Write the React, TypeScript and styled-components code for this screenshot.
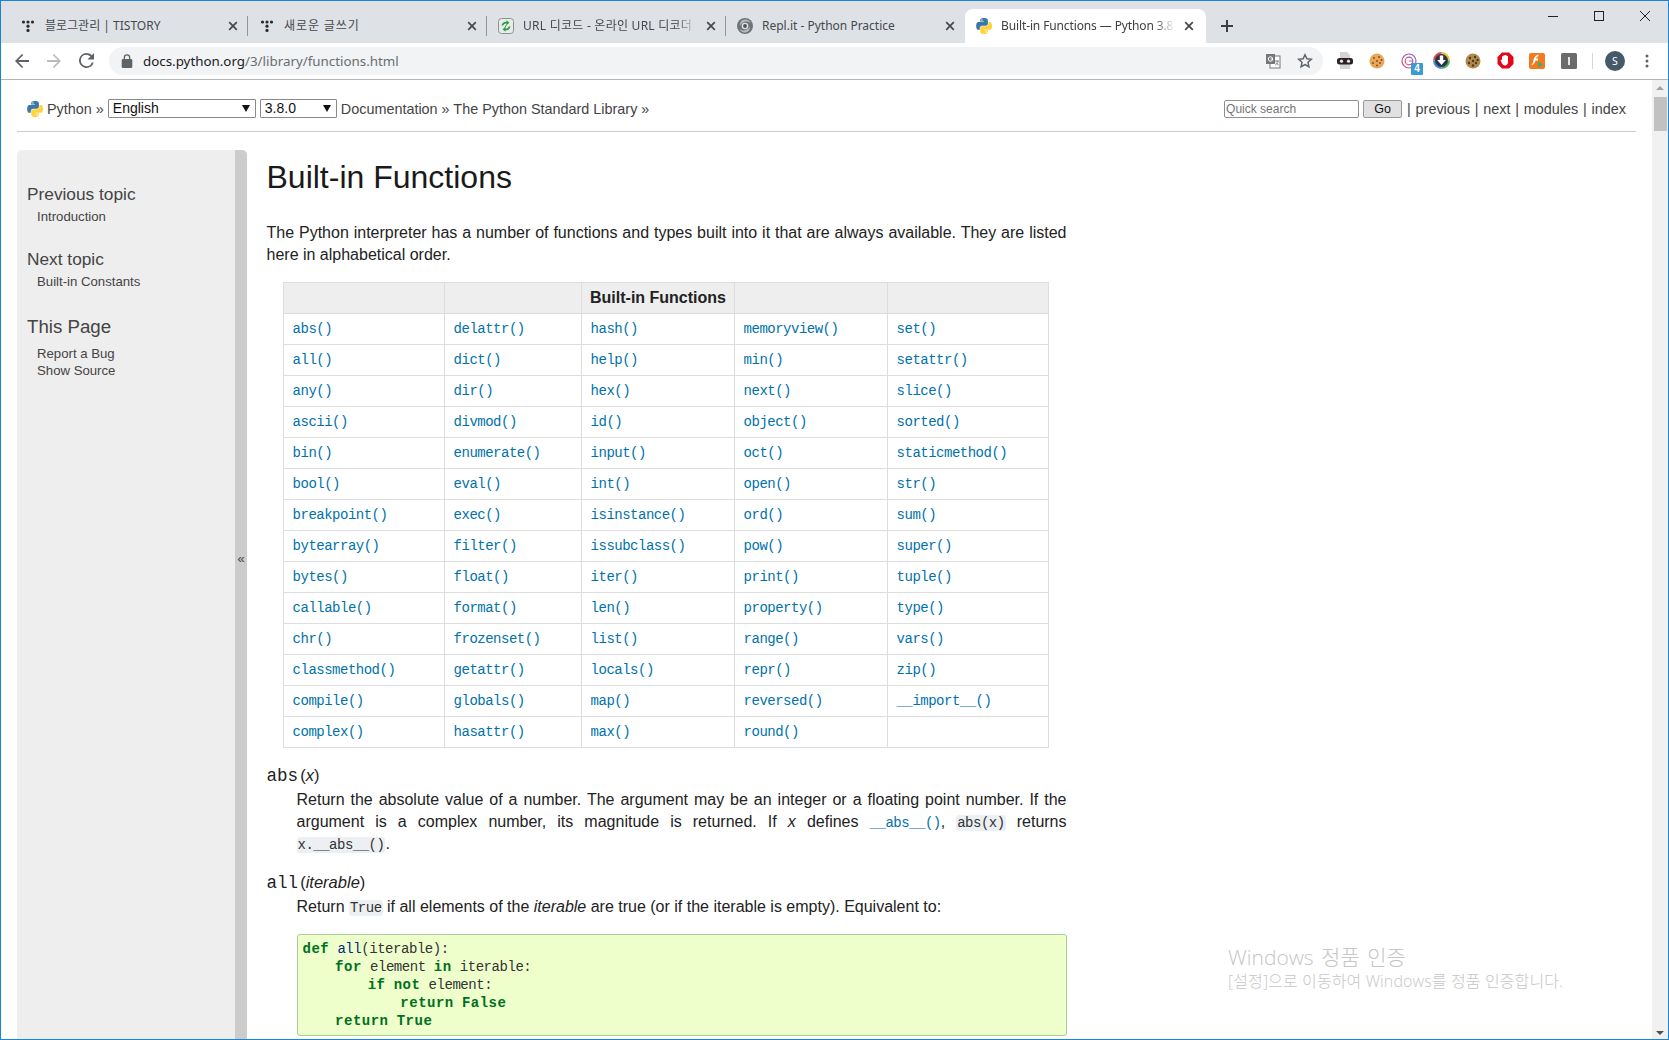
import React from "react";
import styled, { createGlobalStyle } from "styled-components";

const Global = createGlobalStyle`
  html, body { margin: 0; padding: 0; background: #fff; overflow: hidden; }
  * { box-sizing: border-box; }
`;

const UI = `"Noto Sans", "Noto Sans CJK KR", sans-serif`;
const DOC = `"Liberation Sans", "Noto Sans CJK KR", sans-serif`;
const MONO = `"Liberation Mono", "Noto Sans CJK KR", monospace`;

const Win = styled.div`
  width: 1669px; height: 1040px; overflow: hidden; position: relative;
  border: 1px solid #1a84d6; display: flex; flex-direction: column; background: #fff;
`;
const TabStrip = styled.div`
  height: 42px; flex: none; background: #dee1e6; display: flex; align-items: flex-end; padding-left: 8px;
`;
const Tab = styled.div<{ $active?: boolean; $sep?: boolean; $w?: number }>`
  width: ${p => p.$w ?? 239}px; height: 34px; flex: none; position: relative; display: flex; align-items: center;
  padding-left: 11px; font: 12px/16px ${UI}; color: ${p => p.$active ? "#3c4043" : "#45494e"};
  background: ${p => p.$active ? "#fff" : "transparent"};
  border-radius: ${p => p.$active ? "8px 8px 0 0" : "0"};
  &::after {
    content: ""; display: ${p => p.$sep ? "block" : "none"}; position: absolute; right: 0; top: 7px; width: 1px; height: 20px; background: #92969b;
  }
`;
const Fav = styled.span`
  width: 16px; height: 16px; flex: none; display: flex; align-items: center; justify-content: center; margin-right: 9px;
`;
const TabTitle = styled.span<{ $fade?: boolean; $ls?: number }>`
  flex: 1; min-width: 0; white-space: nowrap; overflow: hidden; letter-spacing: ${p => p.$ls ?? 0}px;
  ${p => p.$fade ? "-webkit-mask-image: linear-gradient(90deg, #000 88%, transparent 100%);" : ""}
`;
const TabClose = styled.span<{ $end?: boolean }>`
  width: 16px; height: 16px; flex: none; margin: 0 ${p => p.$end ? 9 : 7}px 0 6px; display: flex; align-items: center; justify-content: center; color: #45494e;
`;
const NewTab = styled.span`
  width: 16px; height: 16px; margin: 0 0 9px 13px; color: #3c4043; display: flex; align-items: center; justify-content: center;
`;
const WinCtrls = styled.div`
  margin-left: auto; align-self: flex-start; display: flex; color: #222;
`;
const WinBtn = styled.span`
  width: 46px; height: 30px; display: flex; align-items: center; justify-content: center;
`;
const Toolbar = styled.div`
  height: 37px; flex: none; background: #fff; border-bottom: 1px solid #b4b4b4; display: flex; align-items: center; padding: 0 7px 1px 5px;
`;
const ToolBtn = styled.span<{ $dim?: boolean }>`
  width: 32px; height: 28px; flex: none; display: flex; align-items: center; justify-content: center; position: relative;
  color: ${p => p.$dim ? "#babcbe" : "#5f6368"};
`;
const Omni = styled.div`
  width: 1214px; height: 28px; margin: 0 6px 0 7px; flex: none; border-radius: 14px; background: #f1f3f4;
  display: flex; align-items: center; padding-left: 11px; padding-right: 2px;
`;
const Lock = styled.span`
  width: 14px; height: 14px; margin-right: 9px; display: flex; align-items: center; justify-content: center; color: #5f6368;
`;
const Url = styled.span`
  font: 13.35px/18px ${UI}; color: #202124; flex: 1; white-space: nowrap;
`;
const UrlRest = styled.span`color: #6a6e73;`;
const Badge = styled.span`
  position: absolute; left: 18px; top: 16px; width: 12px; height: 12px; background: #3b9ad6; color: #fff; font: bold 10px/12px ${DOC}; text-align: center; border-radius: 1px;
`;
const Sep = styled.span`
  width: 1px; height: 16px; background: #d6d7d9; flex: none; margin: 0 6px 0 7px;
`;
const Avatar = styled.span`
  width: 20px; height: 20px; flex: none; margin: 0 6px; border-radius: 50%; background: #455a68; color: #fff; font: 10.5px/20px ${UI}; text-align: center;
`;
const Body = styled.div`
  flex: 1; min-height: 0; display: flex;
`;
const Doc = styled.div`
  width: 1651px; flex: none; padding-left: 16px; overflow: hidden; font: 16px/22px ${DOC}; color: #222;
`;
const Related = styled.div`
  width: 1619px; height: 52px; border-bottom: 1px solid #ccc; display: flex; align-items: center; padding: 6px 10px 0 8px;
  font: 14.4px/18px ${DOC}; color: #444; margin-bottom: 18px;
`;
const Logo = styled.span`
  width: 16px; height: 16px; display: flex; margin: 0 4px 0 2px; flex: none;
`;
const Pick = styled.span<{ $w: number; $second?: boolean }>`
  width: ${p => p.$w}px; height: 19px; flex: none; border: 1px solid #8a8a8a; border-radius: 1px; background: #fff; color: #111;
  display: flex; align-items: center; justify-content: space-between; padding: 0 5px 0 4px; font: 14px/17px ${DOC};
  margin-left: ${p => p.$second ? 0 : 4}px; margin-right: 4px;
`;
const Arrow = styled.span`
  width: 0; height: 0; border-left: 4px solid transparent; border-right: 4px solid transparent; border-top: 7px solid #111;
`;
const Right = styled.div`
  margin-left: auto; display: flex; align-items: center; word-spacing: 0.8px;
`;
const Search = styled.span`
  width: 135px; height: 18px; border: 1px solid #8f8f8f; border-radius: 2px; font: 12px/16px ${DOC}; color: #757575; padding-left: 1px; background: #fff; word-spacing: 0;
`;
const Go = styled.span`
  width: 39px; height: 18px; margin: 0 5px 0 4px; border: 1px solid #999; border-radius: 2px; background: #e1e1e1; color: #111; text-align: center; font: 12.5px/17px ${DOC};
`;
const Columns = styled.div`display: flex; align-items: stretch; height: 900px;`;
const Side = styled.aside`
  width: 230px; flex: none; display: flex; background: #eee; border-radius: 5px 5px 0 0; overflow: hidden;
`;
const SideInner = styled.div`
  flex: 1; padding: 33px 10px 0 10px; color: #444;
`;
const Collapse = styled.div`
  width: 12px; flex: none; background: #ccc; display: flex; align-items: center; justify-content: center; color: #444;
  font: 13px/14px ${DOC}; padding-bottom: 82px;
`;
const SideTitle = styled.div<{ $big?: boolean }>`
  font: ${p => p.$big ? 18.7 : 17.3}px/22px ${DOC}; color: #444;
  margin: ${p => p.$big ? "26px 0 7px" : "0 0 3px"};
`;
const SideLink = styled.div<{ $gap?: boolean }>`
  font: 13.2px/17px ${DOC}; color: #444; padding-left: 10px; margin-bottom: ${p => p.$gap ? 23 : 0}px;
`;
const Main = styled.main`
  width: 800px; margin-left: 19.5px; flex: none;
`;
const H1 = styled.h1`
  font: 400 32px/38px ${DOC}; color: #1a1a1a; margin: 8px 0 26px;
`;
const P = styled.p`
  margin: 0 0 16px; text-align: justify;
`;
const Table = styled.table`
  margin: 0 0 0 16.5px; width: 765px; border-collapse: collapse; table-layout: fixed;
`;
const Col = styled.col<{ $w: number }>`width: ${p => p.$w}px;`;
const Th = styled.th`
  height: 31px; padding: 0 8px 0 8px; background: #eee; border: 1px solid #ddd; font: bold 16px/20px ${DOC}; color: #222; text-align: left;
`;
const Td = styled.td`
  height: 31px; padding: 0 8px 0 8.6px; border: 1px solid #ddd; font: 14px/18px ${MONO}; letter-spacing: -0.5px; color: #0072aa; white-space: nowrap;
`;
const Sig = styled.div<{ $gap: number }>`
  margin-top: ${p => p.$gap}px; font: 16.5px/24px ${DOC}; color: #222; height: 26px; display: flex; align-items: baseline;
`;
const SigName = styled.span`
  font: 17.6px/24px ${MONO}; color: #222; margin-right: 2px;
`;
const Dd = styled.p`
  margin: 0 0 0 30px; text-align: justify; width: 770px;
`;
const Lit = styled.code`
  font: 14px/18px ${MONO}; letter-spacing: -0.5px; background: #ecf0f3; border-radius: 3px; padding: 0 1px; color: #333;
`;
const XRef = styled.code`
  font: 14px/18px ${MONO}; letter-spacing: -0.5px; color: #0072aa;
`;
const Pre = styled.pre`
  margin: 16px 0 0 30px; width: 770px; height: 102px; padding: 5px; background: #eeffcc; border: 1px solid #aacc99; border-radius: 3px;
  font: 14px/18px ${MONO}; letter-spacing: -0.45px; word-spacing: 0.2px; color: #333; overflow: hidden;
`;
const Kw = styled.b`color: #007020; font-weight: 700; letter-spacing: 0.5px;`;
const Fn = styled.span`color: #06287e;`;
const Scrollbar = styled.div`
  width: 16px; flex: none; background: #f1f1f1; display: flex; flex-direction: column; align-items: center; justify-content: space-between; padding: 6px 0 4px;
`;
const Thumb = styled.div`
  width: 13px; height: 34px; background: #c1c1c1; margin-top: 7px;
`;
const ScrollTop = styled.div`display: flex; flex-direction: column; align-items: center;`;
const UpArrow = styled.span`
  width: 0; height: 0; border-left: 4px solid transparent; border-right: 4px solid transparent; border-bottom: 4px solid #a3a3a3;
`;
const DownArrow = styled.span`
  width: 0; height: 0; border-left: 4px solid transparent; border-right: 4px solid transparent; border-top: 4px solid #505050;
`;
const Watermark = styled.div`
  position: absolute; left: 1227px; top: 943px; color: #c6c6c6; font-family: "Open Sans", "Noto Sans CJK KR", sans-serif; font-weight: 300; pointer-events: none;
`;
const WmTitle = styled.div`font-size: 21px; line-height: 27px; word-spacing: 2px;`;
const WmSub = styled.div`font-size: 16px; line-height: 21px; letter-spacing: 0.12px;`;

const Python = () => (
  <svg width="16" height="16" viewBox="0 0 110 112">
    <path fill="#3b77a8" d="M54.919 0C50.335.021 45.958.412 42.106 1.094 30.76 3.099 28.7 7.295 28.7 15.032v10.219h26.813v3.406H18.638c-7.793 0-14.616 4.684-16.75 13.594-2.462 10.213-2.571 16.586 0 27.25 1.905 7.938 6.457 13.594 14.25 13.594h9.22V70.844c0-8.85 7.657-16.657 16.75-16.657h26.781c7.454 0 13.406-6.138 13.406-13.625V15.032c0-7.266-6.13-12.725-13.406-13.937C64.282.328 59.502-.02 54.919 0zM40.419 8.219c2.77 0 5.031 2.299 5.031 5.125 0 2.816-2.262 5.094-5.031 5.094-2.78 0-5.031-2.278-5.031-5.094 0-2.826 2.251-5.125 5.031-5.125z" />
    <path fill="#ffd43b" d="M85.638 28.657v11.906c0 9.231-7.826 17-16.75 17H42.106c-7.336 0-13.406 6.278-13.406 13.625v25.531c0 7.266 6.319 11.54 13.406 13.625 8.487 2.496 16.626 2.947 26.781 0 6.75-1.954 13.406-5.888 13.406-13.625V86.501H55.513v-3.405h40.188c7.793 0 10.696-5.436 13.406-13.594 2.8-8.399 2.681-16.476 0-27.25-1.926-7.757-5.604-13.594-13.406-13.594zM70.575 93.313c2.78 0 5.031 2.278 5.031 5.094 0 2.826-2.251 5.125-5.031 5.125-2.77 0-5.031-2.299-5.031-5.125 0-2.816 2.261-5.094 5.031-5.094z" />
  </svg>
);
const Tistory = () => (
  <svg width="16" height="16" viewBox="0 0 16 16" fill="#2a2a2a">
    <circle cx="3.5" cy="4" r="1.6" /><circle cx="8" cy="4" r="1.6" /><circle cx="12.5" cy="4" r="1.6" />
    <circle cx="8" cy="8.2" r="1.6" /><circle cx="8" cy="12.4" r="1.6" />
  </svg>
);
const Decode = () => (
  <svg width="16" height="16" viewBox="0 0 16 16">
    <rect x=".5" y=".5" width="15" height="15" rx="3" fill="#e8ece8" stroke="#8c918c" />
    <path d="M3.500 7.500C4 5 6 3.500 8.500 3.700V2.300l3 2.400-3 2.400V5.500c-1.500-.2-2.700.6-3.300 2z" fill="#2e9a46" />
    <path d="M12.500 8.500C12 11 10 12.500 7.500 12.300v1.400l-3-2.400 3-2.400v1.600c1.500.2 2.700-.6 3.300-2z" fill="#2e9a46" />
    <path d="M8.800 6.500l-2 3" stroke="#2e9a46" strokeWidth="1" />
  </svg>
);
const Replit = () => (
  <svg width="16" height="16" viewBox="0 0 16 16">
    <circle cx="8" cy="8" r="8" fill="#6d7478" />
    <path d="M8 1.600a6.400 6.400 0 0 1 5.800 3.600C11.500 3.200 8 3 5.600 4.700 4.200 5.700 3.300 6.800 3 8c-.4-3 1.500-6.400 5-6.400zM8 14.400A6.400 6.400 0 0 1 2.200 10.800c2.300 2 5.800 2.200 8.200.5 1.600-1 2.500-2.300 2.600-3.400.4 3-1.500 6.500-5 6.500z" fill="#b6babd" />
    <circle cx="8" cy="8" r="3.300" fill="#dfe1e3" /><circle cx="8" cy="8" r="1.900" fill="#4a5256" />
  </svg>
);
const Close = () => (
  <svg width="10" height="10" viewBox="0 0 10 10" stroke="currentColor" strokeWidth="1.7" fill="none"><path d="M1.2 1.2l7.6 7.6M8.8 1.2L1.2 8.8" /></svg>
);
const Plus = () => (
  <svg width="14" height="14" viewBox="0 0 14 14" fill="currentColor"><path d="M6 1h2v5h5v2H8v5H6V8H1V6h5z" /></svg>
);
const Back = () => (
  <svg width="16" height="16" viewBox="0 0 16 16" fill="currentColor"><path d="M15 7H4.400l4.900-4.900L8 1 1 8l7 7 1.200-1.100L4.400 9H15z" /></svg>
);
const Forward = () => (
  <svg width="16" height="16" viewBox="0 0 16 16" fill="currentColor"><path d="M1 7h10.600L6.700 2.100 8 1l7 7-7 7-1.200-1.100L11.600 9H1z" /></svg>
);
const Reload = () => (
  <svg width="15" height="15" viewBox="0 0 16 16" fill="currentColor"><path d="M13.650 2.350A7.950 7.950 0 0 0 8 0a8 8 0 1 0 7.730 10h-2.080A6 6 0 1 1 8 2c1.660 0 3.140.690 4.220 1.780L9 7h7V0z" /></svg>
);
const LockIcon = () => (
  <svg width="12" height="14" viewBox="0 0 12 14" fill="currentColor"><path d="M10 5h-.7V3.600A3.300 3.300 0 0 0 6 .3a3.300 3.300 0 0 0-3.300 3.300V5H2c-.7 0-1.300.6-1.300 1.300v6.400c0 .7.6 1.300 1.300 1.300h8c.7 0 1.300-.6 1.300-1.300V6.300C11.300 5.600 10.700 5 10 5zM4 3.600a2 2 0 0 1 4 0V5H4z" /></svg>
);
const Translate = () => (
  <svg width="16" height="16" viewBox="0 0 16 16">
    <rect x="5" y="3" width="10" height="12" fill="#fff" stroke="#75787b" />
    <rect x="1" y="1" width="9" height="10" fill="#75787b" />
    <circle cx="5.500" cy="6" r="2.200" fill="none" stroke="#fff" strokeWidth="1" />
    <path d="M5.600 6h2.200" stroke="#fff" />
    <path d="M10 8h4M12 7.500v1M13 8.500c-.3 1.600-1.300 2.800-2.700 3.500M11 9.500c.5 1 1.400 2 2.700 2.500" stroke="#75787b" fill="none" strokeWidth=".9" />
  </svg>
);
const Star = () => (
  <svg width="16" height="16" viewBox="0 0 16 16" fill="none" stroke="#5f6368" strokeWidth="1.500"><path d="M8 1.800l1.900 4 4.400.5-3.300 3 .9 4.400L8 11.500l-3.900 2.200.9-4.400-3.300-3 4.400-.5z" /></svg>
);
const Mask = () => (
  <svg width="18" height="18" viewBox="0 0 18 18">
    <path d="M4 0h7l3 3v4H4zM4 12h10v5H4z" fill="#d4d4d4" />
    <rect x="1" y="6" width="16" height="6.500" rx="2.500" fill="#2d2023" />
    <circle cx="5.500" cy="9.200" r="1.600" fill="#e8e6e6" /><circle cx="12.500" cy="9.200" r="1.600" fill="#e8e6e6" />
  </svg>
);
const Cookie = ({ dark }: { dark?: boolean }) => (
  <svg width="16" height="16" viewBox="0 0 16 16">
    <circle cx="8" cy="8" r="7.500" fill={dark ? "#b28a4e" : "#e9a75c"} />
    {[[5, 5], [10, 4], [8, 8], [4, 10], [11, 10], [8, 12.5], [12.5, 7]].map(([x, y], i) => (
      <circle key={i} cx={x} cy={y} r={dark ? 1.2 : 0.9} fill={dark ? "#4d3a1f" : "#7a4a1a"} />
    ))}
  </svg>
);
const Ring = () => (
  <svg width="16" height="16" viewBox="0 0 16 16" fill="none">
    <defs><linearGradient id="rg" x1="0" y1="1" x2="1" y2="0"><stop offset="0" stopColor="#e8505b" /><stop offset="1" stopColor="#8b5cc9" /></linearGradient></defs>
    <circle cx="8" cy="8" r="7" stroke="url(#rg)" strokeWidth="1.200" />
    <circle cx="8" cy="8" r="3.800" stroke="url(#rg)" strokeWidth="1.200" />
    <path d="M8 8h3.500" stroke="#c05cb0" strokeWidth="1" />
  </svg>
);
const Down = () => (
  <svg width="17" height="17" viewBox="0 0 17 17">
    <path d="M8.500 0a8.500 8.500 0 0 1 8.500 8.500H13A4.500 4.500 0 0 0 8.500 4z" fill="#e9c63a" />
    <path d="M17 8.500A8.500 8.500 0 0 1 8.500 17v-4A4.500 4.500 0 0 0 13 8.500z" fill="#4cae5a" />
    <path d="M8.500 17A8.500 8.500 0 0 1 0 8.500h4A4.500 4.500 0 0 0 8.500 13z" fill="#3f8fd8" />
    <path d="M0 8.500A8.500 8.500 0 0 1 8.500 0v4A4.500 4.500 0 0 0 4 8.500z" fill="#d9525a" />
    <circle cx="8.500" cy="8.500" r="6.500" fill="#2e3448" />
    <path d="M6.800 3.500h3.400V8h2.600l-4.300 5-4.300-5h2.600z" fill="#fff" />
  </svg>
);
const Stop = () => (
  <svg width="17" height="17" viewBox="0 0 17 17">
    <path d="M5 .5h7L16.500 5v7L12 16.500H5L.5 12V5z" fill="#e2071b" />
    <path d="M5 8V4.500a.8.8 0 0 1 1.500 0V7.500V3.500a.8.8 0 0 1 1.500 0V7.500V3.200a.8.8 0 0 1 1.500 0V7.500V4.200a.8.8 0 0 1 1.500 0V10c0 2-1.300 3.500-3 3.500-1.400 0-2.200-.7-3-2L3.800 9c-.5-1 .7-1.700 1.200-1z" fill="#fff" />
  </svg>
);
const Flash = () => (
  <svg width="16" height="16" viewBox="0 0 16 16">
    <rect width="16" height="16" rx="2" fill="#f47a1f" />
    <path d="M9.500 1.500C6.500 2 5 4.500 4.500 7c-.3 2-1 4-2.500 5.500 3-.5 4-3 4.500-5H9V5.500H7c.4-1.200 1.200-2 2.500-2.300z" fill="#fff" />
    <path d="M9 8.500l5 3-5 3z" fill="#33b26b" />
  </svg>
);
const IExt = () => (
  <svg width="16" height="16" viewBox="0 0 16 16">
    <rect width="16" height="16" rx="1.500" fill="#6b6b6b" />
    <rect x="7" y="4" width="2" height="8" fill="#e6e6e6" />
  </svg>
);
const Dots = () => (
  <svg width="4" height="14" viewBox="0 0 4 14" fill="#5f6368"><circle cx="2" cy="2" r="1.500" /><circle cx="2" cy="7" r="1.500" /><circle cx="2" cy="12" r="1.500" /></svg>
);

const rows = [
  ["abs()", "delattr()", "hash()", "memoryview()", "set()"],
  ["all()", "dict()", "help()", "min()", "setattr()"],
  ["any()", "dir()", "hex()", "next()", "slice()"],
  ["ascii()", "divmod()", "id()", "object()", "sorted()"],
  ["bin()", "enumerate()", "input()", "oct()", "staticmethod()"],
  ["bool()", "eval()", "int()", "open()", "str()"],
  ["breakpoint()", "exec()", "isinstance()", "ord()", "sum()"],
  ["bytearray()", "filter()", "issubclass()", "pow()", "super()"],
  ["bytes()", "float()", "iter()", "print()", "tuple()"],
  ["callable()", "format()", "len()", "property()", "type()"],
  ["chr()", "frozenset()", "list()", "range()", "vars()"],
  ["classmethod()", "getattr()", "locals()", "repr()", "zip()"],
  ["compile()", "globals()", "map()", "reversed()", "__import__()"],
  ["complex()", "hasattr()", "max()", "round()", ""],
];
const widths = [161, 137, 153, 153, 161];

export default function App() {
  return (
    <Win>
      <Global />
      <TabStrip>
        <Tab $sep><Fav><Tistory /></Fav><TabTitle>블로그관리 | TISTORY</TabTitle><TabClose><Close /></TabClose></Tab>
        <Tab $sep><Fav><Tistory /></Fav><TabTitle $ls={0.9}>새로운 글쓰기</TabTitle><TabClose><Close /></TabClose></Tab>
        <Tab $sep><Fav><Decode /></Fav><TabTitle $fade $ls={0.25}>URL 디코드 - 온라인 URL 디코더 - 인코더</TabTitle><TabClose><Close /></TabClose></Tab>
        <Tab><Fav><Replit /></Fav><TabTitle>Repl.it - Python Practice</TabTitle><TabClose><Close /></TabClose></Tab>
        <Tab $active $w={241}><Fav><Python /></Fav><TabTitle $fade $ls={-0.12}>Built-in Functions — Python 3.8.0 documentation</TabTitle><TabClose $end><Close /></TabClose></Tab>
        <NewTab><Plus /></NewTab>
        <WinCtrls>
          <WinBtn><svg width="10" height="10" viewBox="0 0 10 10"><path d="M0 5.500h10" stroke="#222" /></svg></WinBtn>
          <WinBtn><svg width="10" height="10" viewBox="0 0 10 10" fill="none"><rect x=".5" y=".5" width="9" height="9" stroke="#222" /></svg></WinBtn>
          <WinBtn><svg width="10" height="10" viewBox="0 0 10 10" fill="none"><path d="M0 0l10 10M10 0L0 10" stroke="#222" /></svg></WinBtn>
        </WinCtrls>
      </TabStrip>
      <Toolbar>
        <ToolBtn><Back /></ToolBtn>
        <ToolBtn $dim><Forward /></ToolBtn>
        <ToolBtn><Reload /></ToolBtn>
        <Omni>
          <Lock><LockIcon /></Lock>
          <Url>docs.python.org<UrlRest>/3/library/functions.html</UrlRest></Url>
          <ToolBtn><Translate /></ToolBtn>
          <ToolBtn><Star /></ToolBtn>
        </Omni>
        <ToolBtn><Mask /></ToolBtn>
        <ToolBtn><Cookie /></ToolBtn>
        <ToolBtn><Ring /><Badge>4</Badge></ToolBtn>
        <ToolBtn><Down /></ToolBtn>
        <ToolBtn><Cookie dark /></ToolBtn>
        <ToolBtn><Stop /></ToolBtn>
        <ToolBtn><Flash /></ToolBtn>
        <ToolBtn><IExt /></ToolBtn>
        <Sep />
        <Avatar>S</Avatar>
        <ToolBtn><Dots /></ToolBtn>
      </Toolbar>
      <Body>
        <Doc>
          <Related>
            <Logo><Python /></Logo>
            Python »
            <Pick $w={148}>English<Arrow /></Pick>
            <Pick $w={77} $second>3.8.0<Arrow /></Pick>
            Documentation » The Python Standard Library »
            <Right>
              <Search>Quick search</Search>
              <Go>Go</Go>
              | previous | next | modules | index
            </Right>
          </Related>
          <Columns>
            <Side>
              <SideInner>
                <SideTitle>Previous topic</SideTitle>
                <SideLink $gap>Introduction</SideLink>
                <SideTitle>Next topic</SideTitle>
                <SideLink>Built-in Constants</SideLink>
                <SideTitle $big>This Page</SideTitle>
                <SideLink>Report a Bug</SideLink>
                <SideLink>Show Source</SideLink>
              </SideInner>
              <Collapse>«</Collapse>
            </Side>
            <Main>
              <H1>Built-in Functions</H1>
              <P>The Python interpreter has a number of functions and types built into it that are always available. They are listed here in alphabetical order.</P>
              <Table>
                <colgroup>{widths.map((w, i) => <Col key={i} $w={w} />)}</colgroup>
                <thead>
                  <tr><Th /><Th /><Th>Built-in Functions</Th><Th /><Th /></tr>
                </thead>
                <tbody>
                  {rows.map((r, i) => (
                    <tr key={i}>{r.map((c, j) => <Td key={j}>{c}</Td>)}</tr>
                  ))}
                </tbody>
              </Table>
              <Sig $gap={15}><SigName>abs</SigName>(<i>x</i>)</Sig>
              <Dd>Return the absolute value of a number. The argument may be an integer or a floating point number. If the argument is a complex number, its magnitude is returned. If <i>x</i> defines <XRef>__abs__()</XRef>, <Lit>abs(x)</Lit> returns <Lit>x.__abs__()</Lit>.</Dd>
              <Sig $gap={15}><SigName>all</SigName>(<i>iterable</i>)</Sig>
              <Dd>Return <Lit>True</Lit> if all elements of the <i>iterable</i> are true (or if the iterable is empty). Equivalent to:</Dd>
              <Pre><Kw>def</Kw> <Fn>all</Fn>(iterable):{"\n"}    <Kw>for</Kw> element <Kw>in</Kw> iterable:{"\n"}        <Kw>if</Kw> <Kw>not</Kw> element:{"\n"}            <Kw>return</Kw> <Kw>False</Kw>{"\n"}    <Kw>return</Kw> <Kw>True</Kw></Pre>
            </Main>
          </Columns>
        </Doc>
        <Scrollbar>
          <ScrollTop><UpArrow /><Thumb /></ScrollTop>
          <DownArrow />
        </Scrollbar>
      </Body>
      <Watermark>
        <WmTitle>Windows 정품 인증</WmTitle>
        <WmSub>[설정]으로 이동하여 Windows를 정품 인증합니다.</WmSub>
      </Watermark>
    </Win>
  );
}
